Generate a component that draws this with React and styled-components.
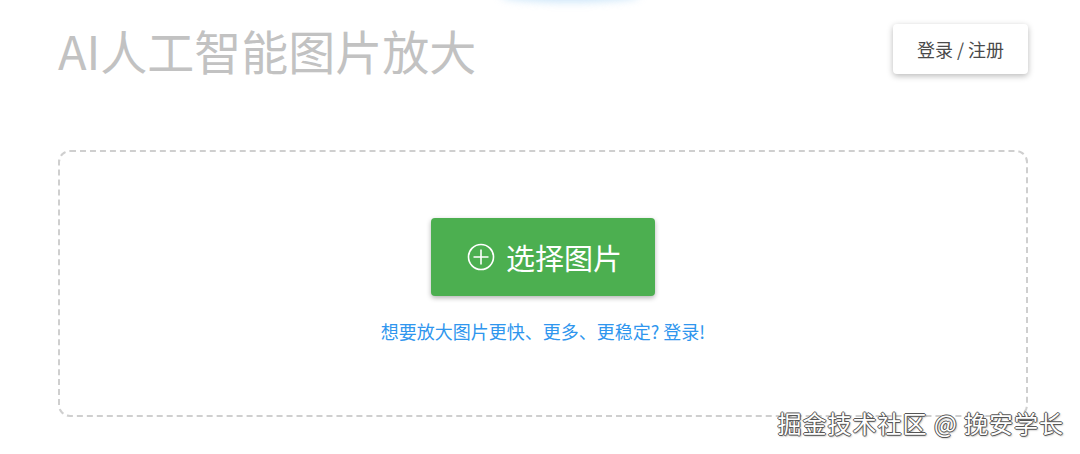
import styled, { createGlobalStyle } from 'styled-components';

const GlobalStyle = createGlobalStyle`
  html, body {
    margin: 0;
    padding: 0;
    background: #fff;
  }
  body {
    font-family: "Noto Sans CJK SC", "Noto Sans", sans-serif;
  }
`;

const Page = styled.div`
  position: relative;
  width: 1080px;
  height: 454px;
  box-sizing: border-box;
  padding: 24px 52px 0 58px;
  overflow: hidden;
`;

const Glow = styled.div`
  position: absolute;
  top: -12px;
  left: 500px;
  width: 140px;
  height: 14px;
  border-radius: 50%;
  background: #a8d4f5;
  filter: blur(4px);
  opacity: 0.6;
`;

const Header = styled.header`
  display: flex;
  align-items: center;
  justify-content: space-between;
  height: 50px;
`;

const Title = styled.h1`
  margin: 0;
  font-size: 47px;
  font-weight: 400;
  line-height: 1;
  color: #c2c2c2;
`;

const LoginButton = styled.button`
  width: 135px;
  height: 50px;
  border: 0;
  border-radius: 4px;
  background: #fff;
  color: #4a4a4a;
  font-family: inherit;
  font-size: 18px;
  cursor: pointer;
  box-shadow: 0 2px 6px rgba(0, 0, 0, 0.28);
`;

const DropZone = styled.section`
  margin-top: 76px;
  height: 267px;
  box-sizing: border-box;
  border: 2px dashed #cfcfcf;
  border-radius: 12px;
  display: flex;
  flex-direction: column;
  align-items: center;
  justify-content: center;
  gap: 24px;
  padding-bottom: 8px;
`;

const PickButton = styled.button`
  display: flex;
  align-items: center;
  gap: 11px;
  height: 78px;
  padding: 0 33px 0 36px;
  border: 0;
  border-radius: 4px;
  background: #4caf50;
  color: #fff;
  font-family: inherit;
  font-size: 29px;
  cursor: pointer;
  box-shadow: 0 2px 5px rgba(0, 0, 0, 0.3);
`;

const Hint = styled.a`
  font-size: 18px;
  line-height: 22px;
  color: #2f96ee;
  text-decoration: none;
  cursor: pointer;
`;

const Watermark = styled.div`
  position: absolute;
  right: 16px;
  bottom: 14px;
  font-size: 24px;
  color: #fff;
  letter-spacing: 1px;
  text-shadow:
    1px 0 0 #555,
    -1px 0 0 #555,
    0 1px 0 #555,
    0 -1px 0 #555,
    1px 1px 2px rgba(0, 0, 0, 0.5);
`;

const PlusCircle = () => (
  <svg width="28" height="28" viewBox="0 0 28 28" fill="none" stroke="#fff" strokeWidth="1.6">
    <circle cx="14" cy="14" r="12.5" />
    <path d="M14 6.5v15M6.5 14h15" />
  </svg>
);

export default function App() {
  return (
    <>
      <GlobalStyle />
      <Page>
        <Glow />
        <Header>
          <Title>AI人工智能图片放大</Title>
          <LoginButton>登录 / 注册</LoginButton>
        </Header>
        <DropZone>
          <PickButton>
            <PlusCircle />
            选择图片
          </PickButton>
          <Hint>想要放大图片更快、更多、更稳定? 登录!</Hint>
        </DropZone>
        <Watermark>掘金技术社区 @ 挽安学长</Watermark>
      </Page>
    </>
  );
}
